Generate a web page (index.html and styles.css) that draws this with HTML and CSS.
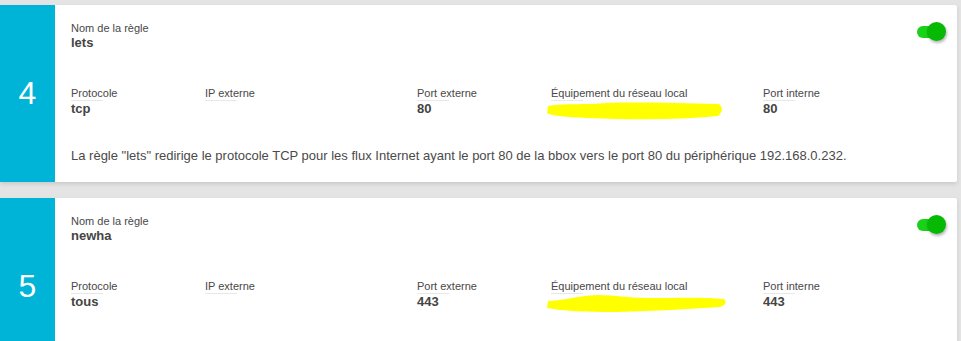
FILE: index.html
```html
<!DOCTYPE html>
<html lang="fr">
<head>
    <meta charset="UTF-8">
    <title>Redirections de ports</title>
    <link rel="stylesheet" href="styles.css">
</head>
<body>
    <div class="rules">
        <!-- Règle 4 -->
        <div class="rule">
            <div class="rule-num">4</div>
            <div class="rule-body">
                <div class="field">
                    <div class="label">Nom de la règle</div>
                    <div class="value">lets</div>
                </div>
                <div class="grid">
                    <div class="field">
                        <div class="label line">Protocole</div>
                        <div class="value">tcp</div>
                    </div>
                    <div class="field">
                        <div class="label line">IP externe</div>
                        <div class="value"></div>
                    </div>
                    <div class="field">
                        <div class="label line">Port externe</div>
                        <div class="value">80</div>
                    </div>
                    <div class="field">
                        <div class="label line">Équipement du réseau local</div>
                        <div class="value">
                            <svg class="scribble" width="176" height="18" viewBox="0 0 176 18">
                                <path d="M1 4 C20 1 40 3 60 1 C90 0 130 1 172 2 C176 5 176 10 171 14 C130 18 90 18 40 16 C20 15 5 14 0 11 Z" fill="#ffff00"/>
                            </svg>
                        </div>
                    </div>
                    <div class="field">
                        <div class="label line">Port interne</div>
                        <div class="value">80</div>
                    </div>
                </div>
                <p class="desc">La règle "lets" redirige le protocole TCP pour les flux Internet ayant le port 80 de la bbox vers le port 80 du périphérique 192.168.0.232.</p>
            </div>
            <span class="toggle on"></span>
        </div>

        <!-- Règle 5 -->
        <div class="rule">
            <div class="rule-num">5</div>
            <div class="rule-body">
                <div class="field">
                    <div class="label">Nom de la règle</div>
                    <div class="value">newha</div>
                </div>
                <div class="grid">
                    <div class="field">
                        <div class="label line">Protocole</div>
                        <div class="value">tous</div>
                    </div>
                    <div class="field">
                        <div class="label line">IP externe</div>
                        <div class="value"></div>
                    </div>
                    <div class="field">
                        <div class="label line">Port externe</div>
                        <div class="value">443</div>
                    </div>
                    <div class="field">
                        <div class="label line">Équipement du réseau local</div>
                        <div class="value">
                            <svg class="scribble" width="180" height="18" viewBox="0 0 180 18">
                                <path d="M1 6 C20 5 30 1 50 0 C70 0 80 3 100 3 C130 3 160 2 177 4 C180 7 179 10 173 12 C140 14 110 16 70 17 C40 17 15 16 0 13 Z" fill="#ffff00"/>
                            </svg>
                        </div>
                    </div>
                    <div class="field">
                        <div class="label line">Port interne</div>
                        <div class="value">443</div>
                    </div>
                </div>
                <div class="desc-space"></div>
            </div>
            <span class="toggle on"></span>
        </div>
    </div>
</body>
</html>
```

FILE: styles.css
```css
/* Liste des règles NAT */
body {
    margin: 0;
    padding: 5px 4px 0 0;
    background-color: #e4e4e4;
    font-family: 'Liberation Sans', Arial, sans-serif;
    color: #4a4a4a;
    overflow: hidden;
}

.rules {
    display: flex;
    flex-direction: column;
    gap: 16px;
}

.rule {
    display: flex;
    position: relative;
    background: #fff;
    box-shadow: 0 2px 4px rgba(0, 0, 0, 0.12);
    border-radius: 0 2px 2px 0;
}

.rule-num {
    width: 55px;
    flex-shrink: 0;
    background-color: #00b4d8;
    color: #fff;
    font-size: 32px;
    display: flex;
    align-items: center;
    justify-content: center;
}

.rule-body {
    flex: 1;
    padding: 17px 16px 17px 16px;
}

.label {
    font-size: 11px;
    line-height: 13px;
    color: #484848;
}

.label.line {
    position: relative;
    padding-bottom: 1px;
}

.label.line::after {
    content: "";
    position: absolute;
    left: 0;
    bottom: 0;
    width: 32px;
    height: 1px;
    background: #e8e8e8;
}

.value {
    font-size: 13px;
    line-height: 16px;
    font-weight: bold;
    color: #444;
    min-height: 16px;
}

.grid {
    display: grid;
    grid-template-columns: 134px 212px 134px 212px auto;
    margin-top: 36px;
}

.scribble {
    display: block;
    margin: 1px 0 -3px -4px;
}

.desc {
    margin: 30px 0 0;
    font-size: 13px;
    line-height: 18px;
    color: #4a4a4a;
}

.desc-space {
    height: 48px;
}

/* interrupteur */
.toggle {
    position: absolute;
    top: 21px;
    right: 20px;
    width: 20px;
    height: 12px;
    border-radius: 6px;
    background: #19d119;
}

.toggle.on::after {
    content: "";
    position: absolute;
    top: -4px;
    right: -9px;
    width: 19px;
    height: 19px;
    border-radius: 50%;
    background: #05b905;
    box-shadow: 1px 2px 3px rgba(0, 0, 0, 0.3);
}
```
